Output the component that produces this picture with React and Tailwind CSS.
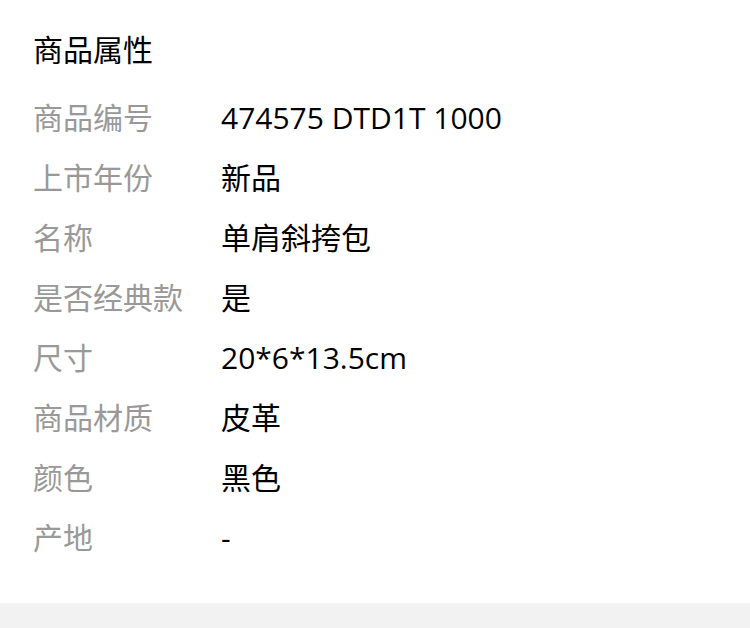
import React from "react";

const rows = [
  ["商品编号", "474575 DTD1T 1000"],
  ["上市年份", "新品"],
  ["名称", "单肩斜挎包"],
  ["是否经典款", "是"],
  ["尺寸", "20*6*13.5cm"],
  ["商品材质", "皮革"],
  ["颜色", "黑色"],
  ["产地", "-"],
];

export default function App() {
  return (
    <div
      className="w-[750px] h-[628px] bg-white flex flex-col overflow-hidden"
      style={{ fontFamily: '"Open Sans", "Noto Sans CJK SC", sans-serif' }}
    >
      <div className="px-[33px] pt-[30px] pb-[35px]">
        <div className="text-[30px] leading-[40px] text-black">商品属性</div>
        <div className="mt-[18px] flex flex-col">
          {rows.map(([k, v]) => (
            <div key={k} className="h-[60px] flex items-center text-[30px] leading-[40px]">
              <div className="w-[188px] shrink-0 text-[#999999]">{k}</div>
              <div className="text-black">{v}</div>
            </div>
          ))}
        </div>
      </div>
      <div className="flex-1 bg-[#f2f2f2]" />
    </div>
  );
}
